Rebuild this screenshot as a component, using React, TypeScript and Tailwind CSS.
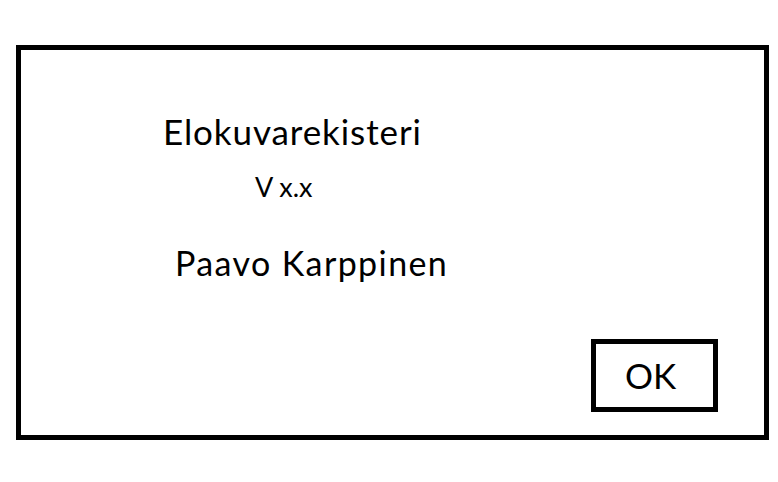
export default function App() {
  return (
    <main className="w-[778px] h-[482px] bg-white pt-[45px] pl-[16px]" style={{ fontFamily: 'Lato, "Open Sans", sans-serif' }}>
      <div className="w-[753px] h-[395px] border-[5px] border-black flex flex-col text-black">
        <h1 className="ml-[142px] mt-[64px] text-[35px] leading-none font-normal tracking-[0.9px]">Elokuvarekisteri</h1>
        <p className="ml-[234px] mt-[24px] text-[27px] leading-none">V x.x</p>
        <p className="ml-[154px] mt-[46px] text-[34px] leading-none tracking-[1.4px]">Paavo Karppinen</p>
        <button className="mt-auto self-end mr-[46px] mb-[23px] w-[127px] h-[73px] border-[5px] border-black bg-white text-[35px] leading-none flex items-center justify-center pr-[8px]">
          OK
        </button>
      </div>
    </main>
  )
}
